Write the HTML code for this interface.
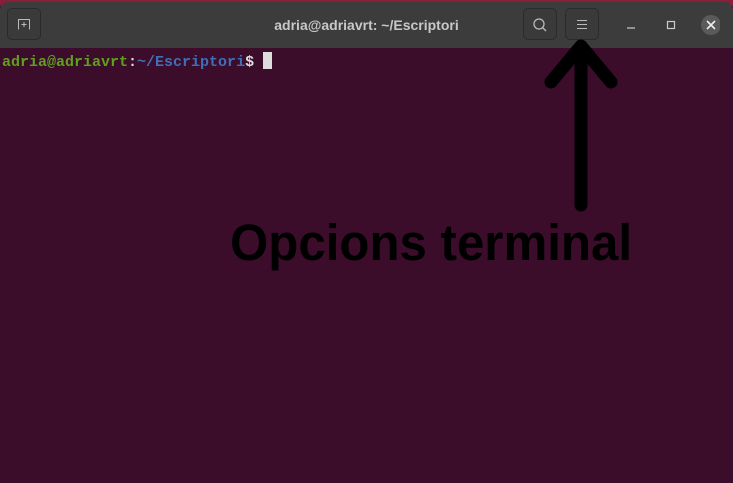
<!DOCTYPE html>
<html><head><style>
body{margin:0;width:733px;height:483px;overflow:hidden;background:#3b0d2b;font-family:"Liberation Sans",sans-serif;position:relative}
.top{position:absolute;left:0;top:0;width:733px;height:6px;background:#8a1e3a}
.hdr{position:absolute;left:0;top:2px;width:733px;height:46px;background:#3c3c3c;border-radius:8px 8px 0 0}
.btn{position:absolute;top:8px;width:34px;height:32px;border:1px solid #2a2a2a;border-radius:5px;background:#3a3a3a;box-sizing:border-box}
.title{position:absolute;top:17px;left:0;width:733px;text-align:center;color:#c8c8c8;font-weight:bold;font-size:14px}
.term{position:absolute;left:2px;top:52px;font-family:"Liberation Mono",monospace;font-size:15px;font-weight:bold}
</style></head><body>
<div class="top"></div>
<div class="hdr"></div>
<div class="btn" style="left:7px"></div>
<svg style="position:absolute;left:17px;top:18px" width="14" height="12"><path d="M1.5 11.5V1.5H12.5V11.5" fill="none" stroke="#bbb" stroke-width="1"/><path d="M7 4V9M4.5 6.5H9.5" stroke="#bbb"/></svg>
<div class="title">adria@adriavrt: ~/Escriptori</div>
<div class="btn" style="left:523px"></div>
<svg style="position:absolute;left:532px;top:17px" width="16" height="16"><circle cx="7" cy="7" r="5" fill="none" stroke="#bbb" stroke-width="1.3"/><path d="M10.5 10.5L14 14" stroke="#bbb" stroke-width="1.3"/></svg>
<div class="btn" style="left:565px"></div>
<svg style="position:absolute;left:576px;top:19px" width="12" height="11"><path d="M1 1.5H11M1 5.5H11M1 9.5H11" stroke="#bbb" stroke-width="1"/></svg>
<svg style="position:absolute;left:620px;top:15px" width="100" height="22"><path d="M7 13H15" stroke="#ccc" stroke-width="1.2"/><rect x="47.5" y="6.5" width="7" height="7" fill="none" stroke="#ccc" stroke-width="1.2"/><circle cx="91" cy="10" r="10" fill="#5a5a5a"/><path d="M87 6L95 14M95 6L87 14" stroke="#eee" stroke-width="1.6"/></svg>
<div class="term"><span style="color:#5fa11c">adria@adriavrt</span><span style="color:#ddd">:</span><span style="color:#3f6fb8">~/Escriptori</span><span style="color:#ddd">$ </span><span style="display:inline-block;width:9px;height:17px;background:#ddd;vertical-align:-3px"></span></div>
<svg style="position:absolute;left:0;top:0" width="733" height="483">
<path d="M581 205V48M551 82L581 46L611 82" fill="none" stroke="#000" stroke-width="13" stroke-linecap="round" stroke-linejoin="round"/>
<text x="230" y="260" font-family="Liberation Sans" font-weight="bold" font-size="51" textLength="402" lengthAdjust="spacingAndGlyphs" fill="#000">Opcions terminal</text>
</svg>
</body></html>
